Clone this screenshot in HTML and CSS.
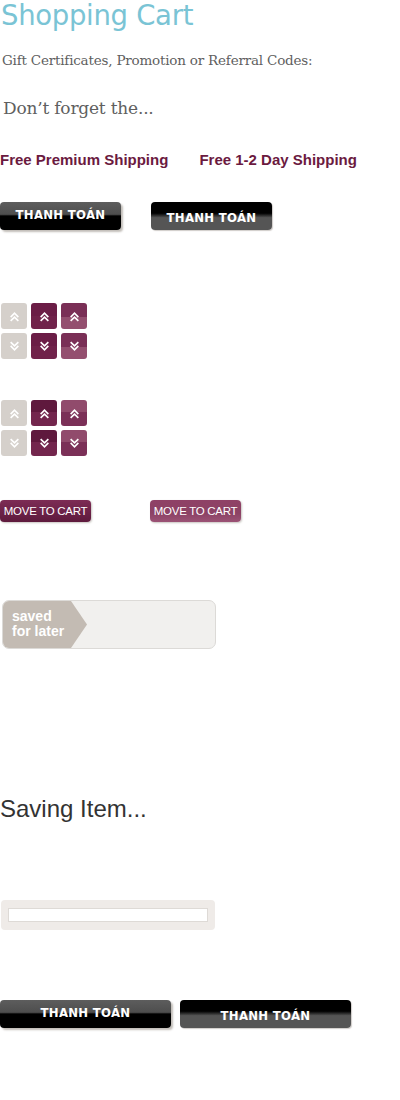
FILE: index.html
```html
<!DOCTYPE html>
<html>
<head>
<meta charset="utf-8">
<link rel="stylesheet" href="styles.css">
</head>
<body>
<h1 class="title">Shopping Cart</h1>
<p class="codes">Gift Certificates, Promotion or Referral Codes:</p>
<h2 class="forget">Don’t forget the...</h2>
<div class="shipping"><span>Free Premium Shipping</span><span>Free 1-2 Day Shipping</span></div>

<div class="pay-row">
  <a class="pay pay-up">THANH TOÁN</a>
  <a class="pay pay-down">THANH TOÁN</a>
</div>

<div class="arrows arrows-1">
  <span class="arr grey"><svg viewBox="0 0 10 10"><path d="M1.5 5.5L5 2L8.5 5.5M1.5 9L5 5.5L8.5 9"/></svg></span>
  <span class="arr dark"><svg viewBox="0 0 10 10"><path d="M1.5 5.5L5 2L8.5 5.5M1.5 9L5 5.5L8.5 9"/></svg></span>
  <span class="arr light"><svg viewBox="0 0 10 10"><path d="M1.5 5.5L5 2L8.5 5.5M1.5 9L5 5.5L8.5 9"/></svg></span>
  <span class="arr grey"><svg viewBox="0 0 10 10"><path d="M1.5 1L5 4.5L8.5 1M1.5 4.5L5 8L8.5 4.5"/></svg></span>
  <span class="arr dark"><svg viewBox="0 0 10 10"><path d="M1.5 1L5 4.5L8.5 1M1.5 4.5L5 8L8.5 4.5"/></svg></span>
  <span class="arr light"><svg viewBox="0 0 10 10"><path d="M1.5 1L5 4.5L8.5 1M1.5 4.5L5 8L8.5 4.5"/></svg></span>
</div>

<div class="arrows arrows-2">
  <span class="arr grey"><svg viewBox="0 0 10 10"><path d="M1.5 5.5L5 2L8.5 5.5M1.5 9L5 5.5L8.5 9"/></svg></span>
  <span class="arr dark2"><svg viewBox="0 0 10 10"><path d="M1.5 5.5L5 2L8.5 5.5M1.5 9L5 5.5L8.5 9"/></svg></span>
  <span class="arr light2"><svg viewBox="0 0 10 10"><path d="M1.5 5.5L5 2L8.5 5.5M1.5 9L5 5.5L8.5 9"/></svg></span>
  <span class="arr grey"><svg viewBox="0 0 10 10"><path d="M1.5 1L5 4.5L8.5 1M1.5 4.5L5 8L8.5 4.5"/></svg></span>
  <span class="arr dark2"><svg viewBox="0 0 10 10"><path d="M1.5 1L5 4.5L8.5 1M1.5 4.5L5 8L8.5 4.5"/></svg></span>
  <span class="arr light2"><svg viewBox="0 0 10 10"><path d="M1.5 1L5 4.5L8.5 1M1.5 4.5L5 8L8.5 4.5"/></svg></span>
</div>

<div class="move-row">
  <a class="move move-dark">MOVE TO CART</a>
  <a class="move move-light">MOVE TO CART</a>
</div>

<div class="saved">
  <div class="saved-tag">saved<br>for later</div>
</div>

<p class="saving">Saving Item...</p>

<div class="progress"><div class="track"></div></div>

<div class="pay-row wide">
  <a class="pay pay-up">THANH TOÁN</a>
  <a class="pay pay-down">THANH TOÁN</a>
</div>
</body>
</html>
```

FILE: styles.css
```css
* { box-sizing: border-box; }
body {
  margin: 0;
  width: 400px;
  height: 1100px;
  background: #fff;
  font-family: "Liberation Sans", Arial, sans-serif;
}
.title {
  margin: 0;
  padding-left: 1px;
  font-family: "DejaVu Sans", sans-serif;
  font-weight: normal;
  font-size: 27.5px;
  line-height: 30px;
  color: #7ac4d5;
  letter-spacing: -0.3px;
}
.codes {
  margin: 22px 0 0 2px;
  font-family: "DejaVu Serif", serif;
  font-size: 13.5px;
  line-height: 16px;
  color: #5f5f5f;
  letter-spacing: -0.2px;
}
.forget {
  margin: 30px 0 0 3px;
  font-family: "DejaVu Serif", serif;
  font-weight: normal;
  font-size: 17px;
  line-height: 20px;
  color: #5f5f5f;
  letter-spacing: -0.2px;
}
.shipping {
  margin-top: 33px;
  display: flex;
  gap: 31px;
  font-weight: bold;
  font-size: 15px;
  line-height: 17px;
  color: #6b1a3f;
}
.pay-row {
  margin-top: 34px;
  display: flex;
  gap: 30px;
}
.pay {
  display: flex;
  align-items: center;
  justify-content: center;
  width: 121px;
  height: 28px;
  border-radius: 4px;
  color: #fff;
  font-family: "DejaVu Sans Condensed", "DejaVu Sans", sans-serif;
  font-weight: bold;
  font-size: 13px;
  letter-spacing: 0.3px;
  text-decoration: none;
}
.pay-up {
  background: linear-gradient(#5d5d5d 0, #4e4e4e 44%, #000 50%, #000 100%);
  box-shadow: 2px 2px 2px rgba(120, 110, 100, 0.45);
  padding-bottom: 3px;
}
.pay-down {
  background: linear-gradient(#000 0, #000 40%, #555 56%, #555 100%);
  box-shadow: 1px 1px 1px rgba(120, 110, 100, 0.35);
  padding-top: 3px;
}
.arrows {
  display: grid;
  grid-template-columns: repeat(3, 26px);
  grid-auto-rows: 26px;
  gap: 4px;
  margin-left: 1px;
}
.arrows-1 { margin-top: 73px; }
.arrows-2 { margin-top: 41px; }
.arr {
  display: flex;
  align-items: center;
  justify-content: center;
  border-radius: 3px;
}
.arr svg {
  width: 11px;
  height: 11px;
  fill: none;
  stroke: #fff;
  stroke-width: 1.5;
}
.grey { background: #d5d0cb; }
.dark { background: linear-gradient(#6b1d46 0, #6b1d46 50%, #70224a 50%); }
.light { background: linear-gradient(#7a2f56 0, #7a2f56 55%, #944f6f 55%); }
.dark2 { background: linear-gradient(#5f193d 0, #5f193d 45%, #73264d 45%); }
.light2 { background: linear-gradient(#914b6c 0, #914b6c 45%, #7b3057 45%); }
.move-row {
  margin-top: 44px;
  display: flex;
  gap: 59px;
}
.move {
  display: flex;
  align-items: center;
  justify-content: center;
  width: 91px;
  height: 22px;
  border-radius: 4px;
  color: #fff;
  font-size: 11.5px;
  letter-spacing: -0.3px;
  text-decoration: none;
  box-shadow: 1px 1px 2px rgba(120, 110, 100, 0.4);
}
.move-dark { background: linear-gradient(#7d2c55, #5e1a3d); }
.move-light { background: linear-gradient(#8f4166, #8c4265 60%, #9b5275); }
.saved {
  margin: 78px 0 0 2px;
  width: 214px;
  height: 49px;
  border: 1px solid #dcdad7;
  border-radius: 7px;
  background: #f1f0ee;
  overflow: hidden;
}
.saved-tag {
  width: 84px;
  height: 100%;
  background: #c3bbb3;
  clip-path: polygon(0 0, 68px 0, 84px 50%, 68px 100%, 0 100%);
  color: #fff;
  font-weight: bold;
  font-size: 14px;
  line-height: 15px;
  padding: 8px 0 0 9px;
}
.saving {
  margin: 148px 0 0 0;
  font-family: "Liberation Sans", Arial, sans-serif;
  font-size: 24px;
  line-height: 24px;
  color: #333;
}
.progress {
  margin: 79px 0 0 1px;
  width: 214px;
  height: 30px;
  border-radius: 4px;
  background: #efebe8;
  padding: 8px 7px 0 7px;
}
.track {
  height: 14px;
  background: #fff;
  border: 1px solid #dedad6;
}
.pay-row.wide {
  margin-top: 70px;
  gap: 9px;
}
.wide .pay { width: 171px; }
```
